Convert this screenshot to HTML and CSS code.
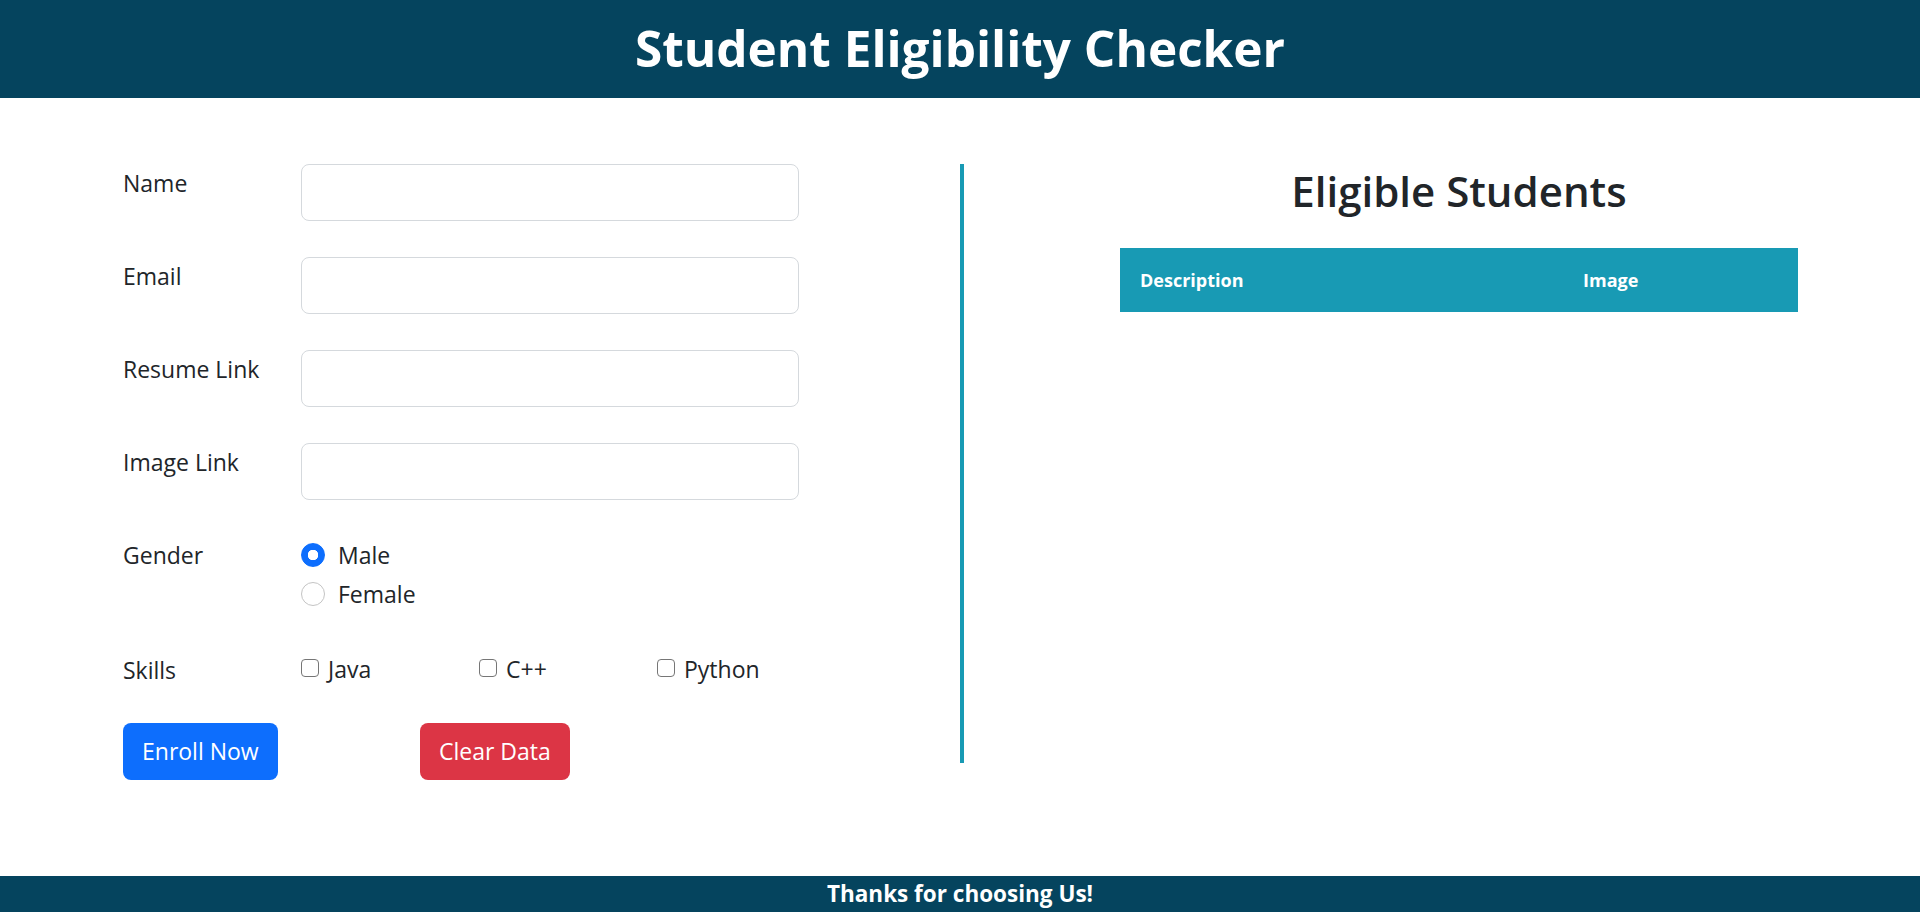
FILE: index.html
```html
<!DOCTYPE html>
<html lang="en">
<head>
<meta charset="utf-8">
<title>Student Eligibility Checker</title>
<link rel="stylesheet" href="styles.css">
</head>
<body>
<header class="site-header">
  <h1 class="site-title">Student Eligibility Checker</h1>
</header>
<main class="main">
  <section class="form-col">
    <form class="enroll-form">
      <div class="form-row">
        <label class="form-label" for="name">Name</label>
        <input class="form-input" id="name" type="text">
      </div>
      <div class="form-row">
        <label class="form-label" for="email">Email</label>
        <input class="form-input" id="email" type="email">
      </div>
      <div class="form-row">
        <label class="form-label" for="resume">Resume Link</label>
        <input class="form-input" id="resume" type="text">
      </div>
      <div class="form-row">
        <label class="form-label" for="image">Image Link</label>
        <input class="form-input" id="image" type="text">
      </div>
      <div class="form-row gender-row">
        <span class="form-label">Gender</span>
        <div class="radio-group">
          <label class="radio-item"><input class="radio" type="radio" name="gender" checked><span>Male</span></label>
          <label class="radio-item"><input class="radio" type="radio" name="gender"><span>Female</span></label>
        </div>
      </div>
      <div class="form-row skills-row">
        <span class="form-label">Skills</span>
        <div class="skills">
          <label class="check-item"><input class="check" type="checkbox"><span>Java</span></label>
          <label class="check-item"><input class="check" type="checkbox"><span>C++</span></label>
          <label class="check-item"><input class="check" type="checkbox"><span>Python</span></label>
        </div>
      </div>
      <div class="actions">
        <button type="button" class="btn btn-primary">Enroll Now</button>
        <button type="button" class="btn btn-danger">Clear Data</button>
      </div>
    </form>
  </section>
  <section class="list-col">
    <div class="list-inner">
      <h2 class="list-title">Eligible Students</h2>
      <table class="list-table">
        <thead>
          <tr><th class="col-desc">Description</th><th class="col-img">Image</th></tr>
        </thead>
        <tbody></tbody>
      </table>
    </div>
  </section>
</main>
<footer class="site-footer">Thanks for choosing Us!</footer>
</body>
</html>
```
FILE: styles.css
```css
* { box-sizing: border-box; }
html, body { margin: 0; height: 100%; }
body {
  font-family: "Open Sans", "Noto Sans", sans-serif;
  color: #212529;
  background: #fff;
  display: flex;
  flex-direction: column;
  min-height: 100vh;
}
.site-header {
  background: #05445e;
  height: 98px;
  display: flex;
  align-items: center;
  justify-content: center;
  flex-shrink: 0;
}
.site-title {
  margin: 0;
  color: #fff;
  font-size: 49.5px;
  font-weight: 700;
  line-height: 1.2;
}
.main {
  flex: 1;
  display: flex;
  padding-top: 66px;
}
.form-col {
  width: 960px;
  flex-shrink: 0;
  padding-left: 123px;
}
.form-row {
  display: flex;
  align-items: flex-start;
  margin-bottom: 36px;
}
.form-label {
  width: 178px;
  flex-shrink: 0;
  font-size: 23px;
  line-height: 36px;
  padding-top: 1px;
}
.form-input {
  width: 498px;
  height: 57px;
  border: 1px solid #d5d9dd;
  border-radius: 8px;
  font: inherit;
  font-size: 23px;
  padding: 0 19px;
  background: #fff;
  outline: none;
}
.gender-row { margin-bottom: 39px; }
.radio-group {
  display: flex;
  flex-direction: column;
  gap: 3px;
  padding-top: 1px;
}
.radio-item {
  display: flex;
  align-items: center;
  height: 36px;
  font-size: 23px;
}
.radio {
  appearance: none;
  -webkit-appearance: none;
  width: 24px;
  height: 24px;
  margin: 0 13px 0 0;
  border: 1px solid #c4c4c4;
  border-radius: 50%;
  background: #fff;
}
.radio:checked {
  border-color: #0d6efd;
  background: radial-gradient(circle, #fff 0 5px, #0d6efd 5.5px);
}
.skills-row { margin-bottom: 35px; }
.skills {
  display: grid;
  grid-template-columns: 178px 178px 178px;
}
.check-item {
  display: flex;
  align-items: center;
  height: 36px;
  font-size: 23px;
}
.check {
  appearance: none;
  -webkit-appearance: none;
  width: 18px;
  height: 18px;
  margin: -3px 9px 0 0;
  border: 1.5px solid #767676;
  border-radius: 4px;
  background: #fff;
}
.actions {
  display: grid;
  grid-template-columns: 297px auto;
  justify-items: start;
}
.btn {
  height: 57px;
  padding: 0 19px;
  border: none;
  border-radius: 8px;
  color: #fff;
  font-family: inherit;
  font-size: 23px;
  line-height: 57px;
  cursor: pointer;
}
.btn-primary { background: #0d6efd; }
.btn-danger { background: #dc3545; }
.list-col {
  width: 960px;
  height: 599px;
  border-left: 4px solid #189ab4;
  padding-left: 156px;
}
.list-inner { width: 678px; }
.list-title {
  margin: 0 0 31px;
  text-align: center;
  font-size: 42px;
  font-weight: 600;
  line-height: 53px;
}
.list-table {
  width: 678px;
  border-collapse: collapse;
}
.list-table th {
  background: #189ab4;
  color: #fff;
  font-size: 18px;
  font-weight: 700;
  text-align: left;
  height: 64px;
  padding: 0 20px;
}
.col-desc { width: 443px; }
.site-footer {
  flex-shrink: 0;
  height: 36px;
  background: #05445e;
  color: #fff;
  text-align: center;
  font-size: 22.5px;
  font-weight: 700;
  line-height: 36px;
}
```
